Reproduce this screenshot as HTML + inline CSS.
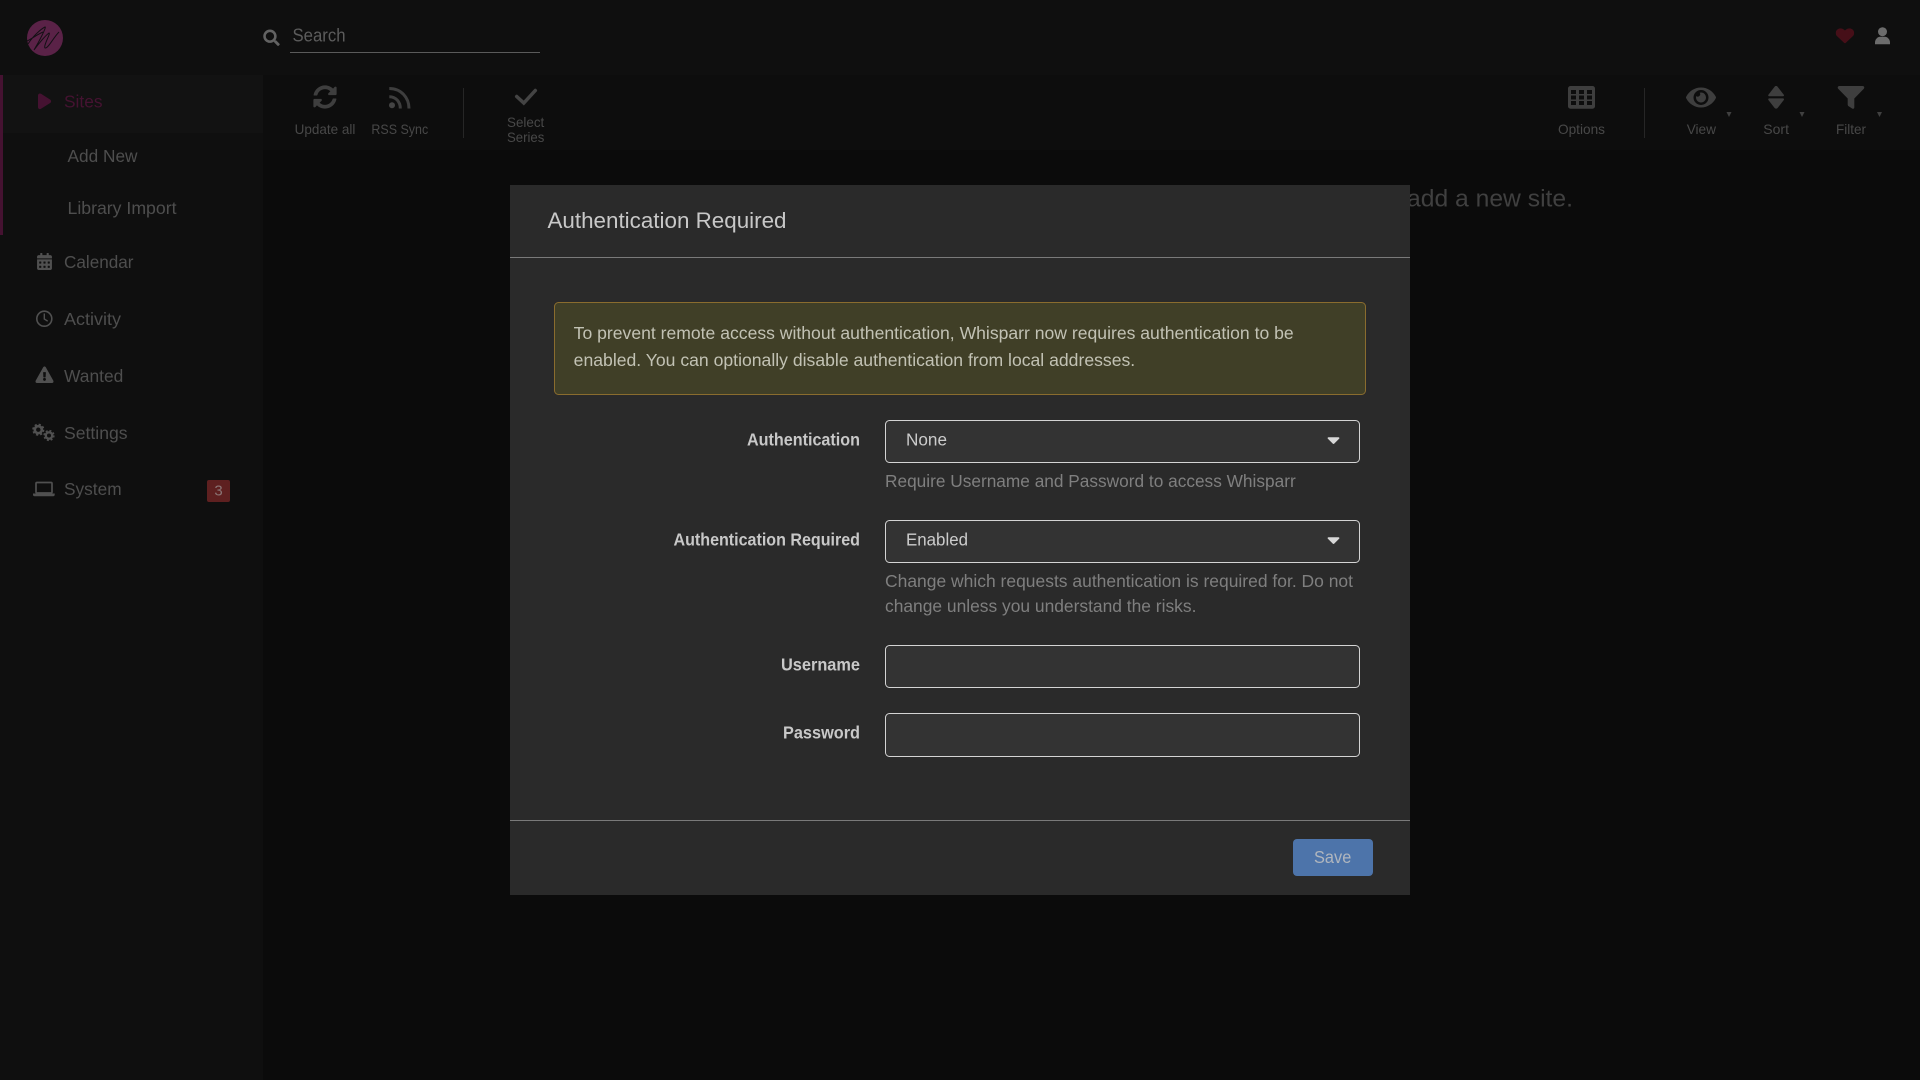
<!DOCTYPE html>
<html lang="en">
<head>
<meta charset="utf-8">
<title>Whisparr</title>
<style>
html,body{margin:0;padding:0;width:1920px;height:1080px;overflow:hidden;background:#0b0b0b}
svg.root{display:block;position:absolute;left:0;top:0;filter:blur(.35px)}
text{font-family:"Liberation Sans",Arial,sans-serif;white-space:pre}
.nav{font-size:17.2px;fill:#4e4e4e}
.tb{font-size:13.8px;fill:#484848}
.ic{fill:#3e3e3e}
.nic{fill:#505050}
.lab{font-size:17.2px;font-weight:700;fill:#c8c8c8}
.help{font-size:17.2px;fill:#7f7f7f}
.val{font-size:17.2px;fill:#cccccc}
.alert{font-size:17.2px;fill:#c2c2b4}
</style>
</head>
<body>
<svg class="root" xmlns="http://www.w3.org/2000/svg" width="1920" height="1080" viewBox="0 0 1920 1080">
<!-- backgrounds -->
<rect width="1920" height="1080" fill="#0b0b0b"/>
<rect width="1920" height="75" fill="#0f0f0f"/>
<rect y="75" width="263" height="1005" fill="#0f0f0f"/>
<rect x="263" y="75" width="1657" height="75" fill="#0d0d0d"/>
<rect x="0" y="75" width="263" height="58" fill="#121212"/>
<rect x="0" y="75" width="3" height="160" fill="#451231"/>

<!-- logo -->
<circle cx="45" cy="38" r="18" fill="#5a2247"/>
<path d="M28 44C33 36 41 29 45 27C47 26 40 40 34 50M34 50C39 43 46 35 49 33C51 33 43 46 45 48C48 49 53 38 59 32M27 41C33 38 38 34 43 32" fill="none" stroke="#141015" stroke-width="1"/>

<!-- search -->
<svg x="263" y="29.5" width="17" height="16.5" viewBox="0 0 512 512"><path fill="#626262" d="M505 442.7L405.3 343c-4.5-4.5-10.6-7-17-7H372c27.6-35.3 44-79.7 44-128C416 93.1 322.9 0 208 0S0 93.1 0 208s93.1 208 208 208c48.3 0 92.7-16.4 128-44v16.3c0 6.4 2.5 12.5 7 17l99.7 99.7c9.4 9.4 24.6 9.4 33.9 0l28.3-28.3c9.4-9.4 9.4-24.6.1-34zM208 336c-70.7 0-128-57.2-128-128 0-70.7 57.2-128 128-128 70.7 0 128 57.2 128 128 0 70.7-57.2 128-128 128z"/></svg>
<text x="292.5" y="41.7" font-size="18.4" fill="#5c5c5c" textLength="53" lengthAdjust="spacingAndGlyphs">Search</text>
<rect x="290" y="52" width="250" height="1" fill="#5a5a5a"/>

<!-- heart / user -->
<svg x="1835.7" y="27.3" width="18.5" height="17" viewBox="0 0 512 512" preserveAspectRatio="none"><path fill="#460f18" d="M462.3 62.6C407.5 15.9 326 24.3 275.7 76.2L256 96.5l-19.7-20.3C186.1 24.3 104.5 15.9 49.7 62.6c-62.8 53.6-66.1 149.8-9.9 207.9l193.5 199.8c12.5 12.9 32.8 12.9 45.3 0l193.5-199.8c56.3-58.1 53-154.3-9.8-207.9z"/></svg>
<circle cx="1882.5" cy="31.7" r="4.5" fill="#6c6c6c"/>
<path d="M1875 42.5c0-3.500 3-5.800 5-5.800h5c2 0 5 2.300 5 5.800v1.700h-15z" fill="#6c6c6c"/>

<!-- sidebar -->
<path d="M38 95.5c0-1.600 1.700-2.500 3-1.700l9.200 5.800c1.200.8 1.200 2.600 0 3.400L41 108.800c-1.300.8-3 0-3-1.600z" fill="#451231"/>
<text x="64" y="107.7" font-size="17.2" fill="#451231" textLength="38.5" lengthAdjust="spacingAndGlyphs">Sites</text>
<text class="nav" x="67.5" y="161.9" textLength="70" lengthAdjust="spacingAndGlyphs">Add New</text>
<text class="nav" x="67.5" y="214" textLength="109" lengthAdjust="spacingAndGlyphs">Library Import</text>
<text class="nav" x="64" y="268" textLength="69.5" lengthAdjust="spacingAndGlyphs">Calendar</text>
<text class="nav" x="64" y="325" textLength="57" lengthAdjust="spacingAndGlyphs">Activity</text>
<text class="nav" x="64" y="382" textLength="59.3" lengthAdjust="spacingAndGlyphs">Wanted</text>
<text class="nav" x="64" y="439" textLength="63.6" lengthAdjust="spacingAndGlyphs">Settings</text>
<text class="nav" x="64" y="495" textLength="57.6" lengthAdjust="spacingAndGlyphs">System</text>

<svg x="37" y="253" width="15" height="17" viewBox="0 0 448 512"><path class="nic" d="M0 464c0 26.5 21.5 48 48 48h352c26.5 0 48-21.5 48-48V192H0v272zm320-196c0-6.6 5.4-12 12-12h40c6.6 0 12 5.4 12 12v40c0 6.6-5.4 12-12 12h-40c-6.6 0-12-5.4-12-12v-40zm0 128c0-6.6 5.4-12 12-12h40c6.6 0 12 5.4 12 12v40c0 6.6-5.4 12-12 12h-40c-6.6 0-12-5.4-12-12v-40zM192 268c0-6.6 5.4-12 12-12h40c6.6 0 12 5.4 12 12v40c0 6.6-5.4 12-12 12h-40c-6.6 0-12-5.4-12-12v-40zm0 128c0-6.6 5.4-12 12-12h40c6.6 0 12 5.4 12 12v40c0 6.6-5.4 12-12 12h-40c-6.6 0-12-5.4-12-12v-40zM64 268c0-6.6 5.4-12 12-12h40c6.6 0 12 5.4 12 12v40c0 6.6-5.4 12-12 12H76c-6.6 0-12-5.4-12-12v-40zm0 128c0-6.6 5.4-12 12-12h40c6.6 0 12 5.4 12 12v40c0 6.6-5.4 12-12 12H76c-6.6 0-12-5.4-12-12v-40zM400 64h-48V16c0-8.8-7.2-16-16-16h-32c-8.8 0-16 7.2-16 16v48H160V16c0-8.8-7.2-16-16-16h-32c-8.8 0-16 7.2-16 16v48H48C21.5 64 0 85.5 0 112v48h448v-48c0-26.5-21.5-48-48-48z"/></svg>
<circle cx="44.3" cy="318.7" r="7.5" fill="none" stroke="#505050" stroke-width="1.6"/>
<path d="M44.3 313.5v5.5l3.4 2.2" fill="none" stroke="#505050" stroke-width="1.4"/>
<svg x="35.5" y="366.5" width="18" height="16.5" viewBox="0 0 576 512" preserveAspectRatio="none"><path class="nic" d="M569.517 440.013C587.975 472.007 564.806 512 527.94 512H48.054c-36.937 0-59.999-40.055-41.577-71.987L246.423 23.985c18.467-32.009 64.72-31.951 83.154 0l239.94 416.028zM288 354c-25.405 0-46 20.595-46 46s20.595 46 46 46 46-20.595 46-46-20.595-46-46-46zm-43.673-165.346l7.418 136c.347 6.364 5.609 11.346 11.982 11.346h48.546c6.373 0 11.635-4.982 11.982-11.346l7.418-136c.375-6.874-5.098-12.654-11.982-12.654h-63.383c-6.884 0-12.356 5.78-11.981 12.654z"/></svg>
<!-- gears -->
<circle cx="38.3" cy="429.7" r="3.5" fill="none" stroke="#505050" stroke-width="2.6"/>
<circle cx="38.3" cy="429.7" r="5.3" fill="none" stroke="#505050" stroke-width="1.6" stroke-dasharray="2.2 2"/>
<circle cx="49" cy="435.5" r="3.2" fill="none" stroke="#505050" stroke-width="2.4"/>
<circle cx="49" cy="435.5" r="4.9" fill="none" stroke="#505050" stroke-width="1.5" stroke-dasharray="2 1.9"/>
<!-- laptop -->
<rect x="36" y="482.5" width="16" height="10.5" rx="1" fill="none" stroke="#505050" stroke-width="1.7"/>
<path d="M33 493.5h21.7v1.2c0 .9-.7 1.5-1.5 1.5H34.5c-.8 0-1.5-.6-1.5-1.5z" fill="#505050"/>
<!-- badge -->
<rect x="207" y="480" width="23" height="22" rx="2" fill="#5e2020"/>
<text x="218.5" y="495.5" font-size="15" fill="#8a7474" text-anchor="middle">3</text>

<!-- toolbar -->
<svg x="313" y="85" width="24" height="24" viewBox="0 0 512 512"><path class="ic" d="M370.72 133.28C339.458 104.008 298.888 87.962 255.848 88c-77.458.068-144.328 53.178-162.791 126.85-1.344 5.363-6.122 9.15-11.651 9.15H24.103c-7.498 0-13.194-6.807-11.807-14.176C33.933 94.924 134.813 8 256 8c66.448 0 126.791 26.136 171.315 68.685L463.03 40.97C478.149 25.851 504 36.559 504 57.941V192c0 13.255-10.745 24-24 24H345.941c-21.382 0-32.09-25.851-16.971-40.971l41.75-41.749zM32 296h134.059c21.382 0 32.09 25.851 16.971 40.971l-41.75 41.75c31.262 29.273 71.835 45.319 114.876 45.28 77.418-.07 144.315-53.144 162.787-126.849 1.344-5.363 6.122-9.15 11.651-9.15h57.304c7.498 0 13.194 6.807 11.807 14.176C478.067 417.076 377.187 504 256 504c-66.448 0-126.791-26.136-171.315-68.685L48.97 471.03C33.851 486.149 8 475.441 8 454.059V320c0-13.255 10.745-24 24-24z"/></svg>
<!-- rss -->
<circle cx="392" cy="105.3" r="3" fill="#444"/>
<path d="M389.3 96.7C396 96.7 400.3 102 400.3 108.5M389.3 88.5C401 88.5 409 97.5 409 108.5" fill="none" stroke="#3e3e3e" stroke-width="3"/>
<!-- check -->
<path d="M516.7 96.5L523.8 103L535.3 90.5" fill="none" stroke="#444" stroke-width="3.5" stroke-linecap="round"/>
<text class="tb" x="294.6" y="134" textLength="60.8" lengthAdjust="spacingAndGlyphs">Update all</text>
<text class="tb" x="371.4" y="134" textLength="56.8" lengthAdjust="spacingAndGlyphs">RSS Sync</text>
<text class="tb" x="507" y="126.8" textLength="37.3" lengthAdjust="spacingAndGlyphs">Select</text>
<text class="tb" x="507" y="141.8" textLength="37.3" lengthAdjust="spacingAndGlyphs">Series</text>
<rect x="463" y="88" width="1" height="50" fill="#262626"/>
<rect x="1644" y="88" width="1" height="50" fill="#262626"/>

<!-- options table -->
<path class="ic" fill-rule="evenodd" d="M1570.5 86h22a2.5 2.5 0 0 1 2.5 2.5v17.7a2.5 2.5 0 0 1-2.5 2.5h-22a2.5 2.5 0 0 1-2.5-2.5V88.5a2.5 2.5 0 0 1 2.5-2.5zM1571 90v4h5v-4zM1579 90v4h5v-4zM1587 90v4h5v-4zM1571 95.5v4h5v-4zM1579 95.5v4h5v-4zM1587 95.5v4h5v-4zM1571 101v4h5v-4zM1579 101v4h5v-4zM1587 101v4h5v-4z"/>
<text class="tb" x="1558" y="134" textLength="47" lengthAdjust="spacingAndGlyphs">Options</text>
<svg x="1686" y="83" width="30" height="29" viewBox="0 0 576 512"><path class="ic" d="M572.52 241.4C518.29 135.59 410.93 64 288 64S57.68 135.64 3.48 241.41a32.35 32.35 0 0 0 0 29.19C57.71 376.41 165.07 448 288 448s230.32-71.64 284.52-177.41a32.35 32.35 0 0 0 0-29.19zM288 400a144 144 0 1 1 144-144 143.93 143.93 0 0 1-144 144zm0-240a95.31 95.31 0 0 0-25.31 3.79 47.85 47.85 0 0 1-66.9 66.9A95.78 95.78 0 1 0 288 160z"/></svg>
<text class="tb" x="1686.7" y="134" textLength="29.3" lengthAdjust="spacingAndGlyphs">View</text>
<path class="ic" d="M1774.6 86.7c.8-.9 2.2-.9 3 0l6.2 8c.5.7 0 1.6-.8 1.6h-13.8c-.8 0-1.3-.9-.8-1.6zM1774.6 108c.8.9 2.2.9 3 0l6.2-8c.5-.7 0-1.6-.8-1.6h-13.8c-.8 0-1.3.9-.8 1.6z"/>
<text class="tb" x="1763.3" y="134" textLength="25.7" lengthAdjust="spacingAndGlyphs">Sort</text>
<!-- filter -->
<path class="ic" d="M1839.3 86h23.4c1.4 0 2.1 1.7 1.1 2.7L1854.3 98.5v8.7c0 1.5-1.1 1.9-2.2 1.3l-3.4-2.2c-.7-.4-1-1-1-1.8v-6L1838.2 88.7c-1-1-.3-2.7 1.1-2.7z"/>
<text class="tb" x="1836" y="134" textLength="30" lengthAdjust="spacingAndGlyphs">Filter</text>
<path d="M1726.5 112h5l-2.5 5zM1799.5 112h5l-2.5 5zM1877 112h5l-2.5 5z" fill="#404040"/>

<!-- background message -->
<text x="1407" y="206.5" font-size="24.5" fill="#404040" textLength="166" lengthAdjust="spacingAndGlyphs">add a new site.</text>

<!-- modal -->
<rect x="510" y="185" width="900" height="710" fill="#2a2a2a"/>
<text x="547.5" y="228" font-size="22" fill="#c8c8c8" textLength="239" lengthAdjust="spacingAndGlyphs">Authentication Required</text>
<rect x="510" y="257" width="900" height="1" fill="#7a7a7a"/>
<rect x="510" y="820" width="900" height="1" fill="#7a7a7a"/>

<rect x="554.5" y="302.5" width="811" height="92" rx="4" fill="#403f27" stroke="#8a6c2e"/>
<text class="alert" x="573.7" y="339" textLength="720" lengthAdjust="spacingAndGlyphs">To prevent remote access without authentication, Whisparr now requires authentication to be</text>
<text class="alert" x="573.7" y="366" textLength="561.5" lengthAdjust="spacingAndGlyphs">enabled. You can optionally disable authentication from local addresses.</text>

<text class="lab" x="747" y="445.5" textLength="113" lengthAdjust="spacingAndGlyphs">Authentication</text>
<text class="lab" x="673.5" y="545.5" textLength="186.5" lengthAdjust="spacingAndGlyphs">Authentication Required</text>
<text class="lab" x="781" y="670.5" textLength="79" lengthAdjust="spacingAndGlyphs">Username</text>
<text class="lab" x="783" y="738.5" textLength="77" lengthAdjust="spacingAndGlyphs">Password</text>

<rect x="885.5" y="420.5" width="474" height="42" rx="4" fill="#333" stroke="#d4d4d4"/>
<rect x="885.5" y="520.5" width="474" height="42" rx="4" fill="#333" stroke="#d4d4d4"/>
<rect x="885.5" y="645.5" width="474" height="42" rx="4" fill="#333" stroke="#d4d4d4"/>
<rect x="885.5" y="713.5" width="474" height="43" rx="4" fill="#333" stroke="#d4d4d4"/>

<text class="val" x="906" y="445.7" textLength="41" lengthAdjust="spacingAndGlyphs">None</text>
<text class="val" x="906" y="545.7" textLength="62" lengthAdjust="spacingAndGlyphs">Enabled</text>
<path d="M1328.5 437.3h10c.8 0 1.2.9.6 1.5l-5 5c-.3.3-.9.3-1.2 0l-5-5c-.6-.6-.2-1.5.6-1.500zM1328.5 537.3h10c.8 0 1.2.9.6 1.5l-5 5c-.3.3-.9.3-1.2 0l-5-5c-.6-.6-.2-1.5.6-1.5z" fill="#d8d8d8"/>

<text class="help" x="885" y="487.2" textLength="410.7" lengthAdjust="spacingAndGlyphs">Require Username and Password to access Whisparr</text>
<text class="help" x="885" y="587.2" textLength="468" lengthAdjust="spacingAndGlyphs">Change which requests authentication is required for. Do not</text>
<text class="help" x="885" y="612.2" textLength="311.4" lengthAdjust="spacingAndGlyphs">change unless you understand the risks.</text>

<rect x="1293" y="839" width="80" height="37" rx="4" fill="#4d74aa"/>
<text x="1314" y="862.9" font-size="17.2" fill="#b0b6be" textLength="37.3" lengthAdjust="spacingAndGlyphs">Save</text>
</svg>
</body>
</html>
